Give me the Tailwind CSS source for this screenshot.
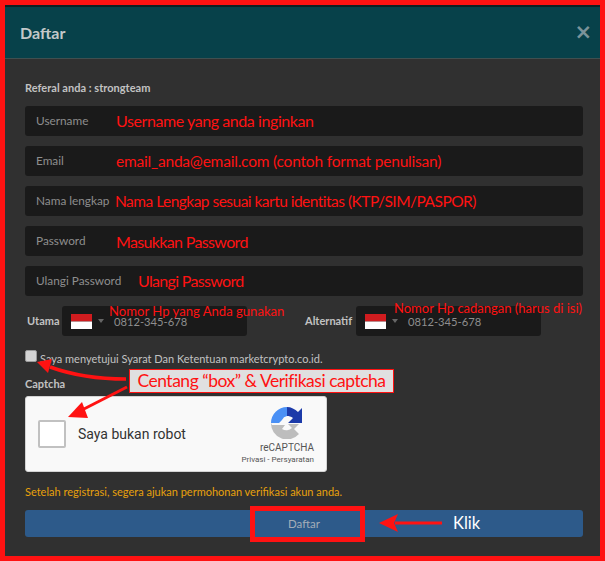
<!DOCTYPE html>
<html lang="en">

<head>
    <meta charset="UTF-8">
    <title>Daftar</title>
    <script src="https://cdn.jsdelivr.net/npm/@tailwindcss/browser@4"></script>
</head>

<body class="bg-[#303030]">
    <section class="relative w-[605px] h-[561px] border-[5px] border-[#ff1212] bg-[#303030] font-['Lato',sans-serif] overflow-hidden">
        <!-- header -->
        <div class="h-[2px] bg-[#0f2024]"></div>
        <header class="h-[52px] bg-[#07414a] border-b border-[#3f4f50] flex items-center justify-between pl-[15px] pr-[8px]">
            <h2 class="text-[16px] font-bold text-[#c3c8c9]">Daftar</h2>
            <span class="text-[21px] font-bold leading-none text-[#7b939a] font-['DejaVu_Sans',sans-serif]">×</span>
        </header>

        <form class="pl-[20px] pr-[17px]">
            <p class="h-[47px] pt-[22px] text-[11px] leading-[14px] font-bold text-[#c2c2c2] tracking-[0.02px]">Referal anda : strongteam</p>
            <div class="flex flex-col gap-[10px]">
                <div class="h-[30px] rounded-[3px] bg-[#1a1a1a] pl-[11px] flex items-center text-[11.8px] text-[#8e8e8e]">Username</div>
                <div class="h-[30px] rounded-[3px] bg-[#1a1a1a] pl-[11px] flex items-center text-[11.8px] text-[#8e8e8e]">Email</div>
                <div class="h-[30px] rounded-[3px] bg-[#1a1a1a] pl-[11px] flex items-center text-[11.8px] text-[#8e8e8e]">Nama lengkap</div>
                <div class="h-[30px] rounded-[3px] bg-[#1a1a1a] pl-[11px] flex items-center text-[11.8px] text-[#8e8e8e]">Password</div>
                <div class="h-[30px] rounded-[3px] bg-[#1a1a1a] pl-[11px] flex items-center text-[11.8px] text-[#8e8e8e]">Ulangi Password</div>
            </div>

            <!-- phone numbers -->
            <div class="mt-[10px] flex h-[30px] items-center">
                <label class="w-[37px] pl-[2px] text-[11px] font-bold text-[#c2c2c2]">Utama</label>
                <div class="w-[185px] h-[30px] rounded-[3px] bg-[#1a1a1a] flex items-center pl-[9px]">
                    <svg width="21" height="15" viewBox="0 0 21 15"><rect width="21" height="7.5" fill="#d01c1f"/><rect y="7.5" width="21" height="7.5" fill="#fff"/></svg>
                    <span class="ml-[6px] w-0 h-0 border-x-[3px] border-x-transparent border-t-[4px] border-t-[#666]"></span>
                    <span class="ml-[10px] mt-[2px] text-[11.2px] leading-[10px] text-[#8e8e8e]">0812-345-678</span>
                </div>
                <label class="ml-[58px] w-[51px] text-[11px] font-bold text-[#c2c2c2]">Alternatif</label>
                <div class="w-[185px] h-[30px] rounded-[3px] bg-[#1a1a1a] flex items-center pl-[9px]">
                    <svg width="21" height="15" viewBox="0 0 21 15"><rect width="21" height="7.5" fill="#d01c1f"/><rect y="7.5" width="21" height="7.5" fill="#fff"/></svg>
                    <span class="ml-[6px] w-0 h-0 border-x-[3px] border-x-transparent border-t-[4px] border-t-[#666]"></span>
                    <span class="ml-[10px] mt-[2px] text-[11.2px] leading-[10px] text-[#8e8e8e]">0812-345-678</span>
                </div>
            </div>

            <div class="mt-[14px] flex items-start h-[26px]">
                <span class="w-[12px] h-[12px] rounded-[2px] bg-[#d4d4d4] border border-[#9a9a9a]"></span>
                <span class="ml-[3px] mt-[2px] text-[11px] leading-[14px] text-[#c2c2c2]">Saya menyetujui Syarat Dan Ketentuan marketcrypto.co.id.</span>
            </div>
            <p class="mt-[1px] h-[19px] text-[11px] leading-[14px] font-bold text-[#c2c2c2]">Captcha</p>

            <!-- recaptcha -->
            <div class="w-[302px] h-[76px] rounded-[3px] bg-[#f9f9f9] border border-[#d3d3d3] flex items-center pl-[12px] pr-[12px]">
                <span class="w-[28px] h-[28px] rounded-[2px] bg-white border-2 border-[#c1c1c1]"></span>
                <span class="ml-[12px] text-[14px] text-[#333] font-['Roboto',sans-serif]">Saya bukan robot</span>
                <div class="ml-auto self-start pt-[10px] flex flex-col items-end font-['Roboto',sans-serif] text-[#555]">
                    <svg class="mr-[11px]" width="32" height="32" viewBox="0 0 32 32">
                        <path d="M16 0 A16 16 0 0 0 0 16 H8 L11 13 A7 7 0 0 1 16 9 Z" fill="#4a90f5"/>
                        <path d="M16 0 C20 0 24 2 27 5 L31 1 V16 H17 L22 11 C20 9.500 18 9 16 9 Z" fill="#1c3aa9"/>
                        <path d="M0 16 A16 16 0 0 0 28 27 L23 22 L28 17 H17 L21 21 A8 8 0 0 1 11 22 L14 18 H1 Z" fill="#bdbdbd"/>
                    </svg>
                    <span class="mt-[3px] text-[10px] leading-[12px]">reCAPTCHA</span>
                    <span class="mt-[1px] text-[8px] leading-[10px]">Privasi - Persyaratan</span>
                </div>
            </div>

            <p class="mt-[13px] h-[25px] text-[11px] leading-[14px] text-[#e8a10c]">Setelah registrasi, segera ajukan permohonan verifikasi akun anda.</p>
            <button type="button" class="w-[558px] h-[27px] rounded-[3px] bg-[#2d5a8a] text-[11.5px] text-[#a3adb8]">Daftar</button>
        </form>

        <!-- red annotations painted over the form -->
        <div class="absolute left-[-5px] top-[-5px] w-[605px] h-[561px] text-[#ff1212] font-['Lato',sans-serif]">
            <span class="absolute left-[116px] top-[111px] text-[16px] leading-[20px] tracking-[-0.42px] whitespace-nowrap">Username yang anda inginkan</span>
            <span class="absolute left-[116px] top-[151px] text-[15.5px] leading-[20px] tracking-[-0.2px] whitespace-nowrap">email_anda@email.com (contoh format penulisan)</span>
            <span class="absolute left-[115px] top-[191px] text-[15.5px] leading-[20px] tracking-[-0.52px] whitespace-nowrap">Nama Lengkap sesuai kartu identitas (KTP/SIM/PASPOR)</span>
            <span class="absolute left-[116px] top-[232px] text-[16px] leading-[20px] tracking-[-0.65px] whitespace-nowrap">Masukkan Password</span>
            <span class="absolute left-[138px] top-[271px] text-[16px] leading-[20px] tracking-[-0.67px] whitespace-nowrap">Ulangi Password</span>
            <span class="absolute left-[109px] top-[306px] text-[13.1px] leading-[10px] whitespace-nowrap">Nomor Hp yang Anda gunakan</span>
            <span class="absolute left-[394px] top-[303px] text-[13px] leading-[10px] whitespace-nowrap">Nomor Hp cadangan (harus di isi)</span>
            <span class="absolute left-[129px] top-[369px] w-[265px] h-[24px] bg-[#e0e0e0] border border-[#ff1212] flex items-center justify-center text-[17.5px] tracking-[-0.48px] whitespace-nowrap">Centang “box” &amp; Verifikasi captcha</span>
            <span class="absolute left-[250px] top-[506px] w-[115px] h-[36px] border-[5px] border-[#ff1212]"></span>
            <span class="absolute left-[453px] top-[513px] text-[16.5px] leading-[20px] text-white">Klik</span>
            <svg class="absolute left-0 top-0" width="605" height="561" viewBox="0 0 605 561" fill="none">
                <path d="M126 379 C100 379 75 376 50 367" stroke="#ff1212" stroke-width="3.500"/>
                <path d="M37 362 L52 359 L48 373 Z" fill="#ff1212"/>
                <path d="M127 387 L80 411" stroke="#ff1212" stroke-width="3"/>
                <path d="M68 417 L82 402 L88 418 Z" fill="#ff1212"/>
                <path d="M442 523 H395" stroke="#ff1212" stroke-width="3"/>
                <path d="M379 523 L398 514 L394 523 L398 532 Z" fill="#ff1212"/>
            </svg>
        </div>
    </section>
</body>

</html>
